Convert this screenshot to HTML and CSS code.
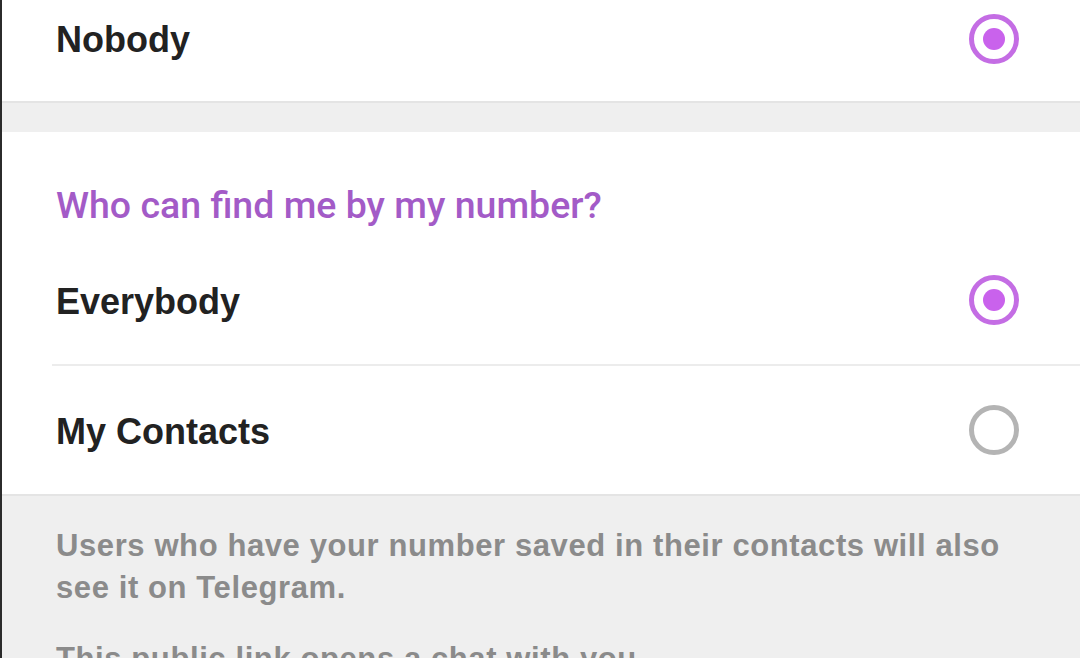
FILE: index.html
```html
<!DOCTYPE html>
<html>
<head>
<meta charset="utf-8">
<link rel="stylesheet" href="styles.css">
</head>
<body>
<div class="screen">
  <section class="card">
    <div class="row row-cut">
      <span class="label">Nobody</span>
      <svg class="radio" viewBox="0 0 50 50" width="50" height="50"><circle cx="25" cy="25" r="22.5" class="ring-on"/><circle cx="25" cy="25" r="11" class="dot"/></svg>
    </div>
  </section>
  <div class="gap"></div>
  <section class="card">
    <h2 class="header">Who can find me by my number?</h2>
    <div class="row">
      <span class="label">Everybody</span>
      <svg class="radio" viewBox="0 0 50 50" width="50" height="50"><circle cx="25" cy="25" r="22.5" class="ring-on"/><circle cx="25" cy="25" r="11" class="dot"/></svg>
    </div>
    <div class="divider"></div>
    <div class="row">
      <span class="label">My Contacts</span>
      <svg class="radio" viewBox="0 0 50 50" width="50" height="50"><circle cx="25" cy="25" r="22.5" class="ring-off"/></svg>
    </div>
  </section>
  <div class="info">
    <p>Users who have your number saved in their contacts will also see it on Telegram.</p>
    <p>This public link opens a chat with you.</p>
  </div>
</div>
</body>
</html>
```
FILE: styles.css
```css
html, body {
  margin: 0;
  padding: 0;
  background: #efefef;
}
.screen {
  border-left: 2px solid #2b2b2b;
  box-sizing: border-box;
  overflow: hidden;
  height: 658px;
}
.card {
  background: #ffffff;
}
.row {
  display: flex;
  align-items: center;
  justify-content: space-between;
  height: 128px;
  padding: 4px 61px 0 54px;
  box-sizing: border-box;
}
.row-cut {
  height: 101px;
  padding-top: 0;
  padding-bottom: 21px;
}
.label {
  font-family: "Liberation Sans", Arial, sans-serif;
  font-weight: bold;
  font-size: 36px;
  color: #222222;
  line-height: 1;
}
.radio {
  display: block;
  flex: none;
  margin-top: -4px;
}
.row-cut .radio {
  margin-top: -2px;
}
.ring-on {
  fill: none;
  stroke: #c46de4;
  stroke-width: 5;
}
.ring-off {
  fill: none;
  stroke: #b4b4b4;
  stroke-width: 5;
}
.dot {
  fill: #c962ec;
}
.gap {
  height: 31px;
  border-top: 2px solid #e4e4e4;
  box-sizing: border-box;
}
.header {
  margin: 0;
  padding: 53px 54px 11px;
  font-family: Roboto, "Liberation Sans", sans-serif;
  font-weight: 500;
  font-size: 37.5px;
  line-height: 40px;
  color: #a35bc7;
}
.divider {
  height: 2px;
  margin-left: 50px;
  background: #ececec;
}
.info {
  border-top: 2px solid #e4e4e4;
  padding: 29px 60px 0 54px;
}
.info p {
  margin: 0 0 29px;
  font-family: "Liberation Sans", Arial, sans-serif;
  font-weight: bold;
  font-size: 31px;
  letter-spacing: 0.6px;
  line-height: 42px;
  color: #8b8b8b;
}
```
